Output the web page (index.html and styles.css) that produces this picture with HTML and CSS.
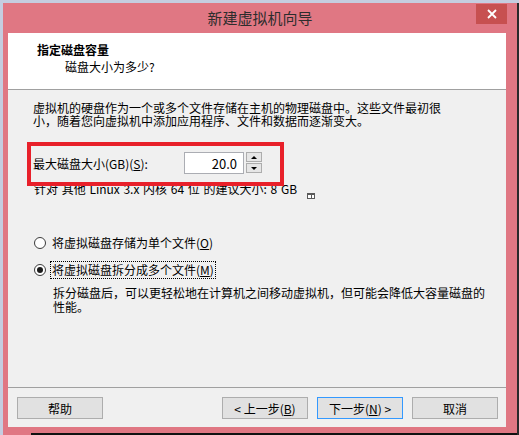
FILE: index.html
```html
<!DOCTYPE html>
<html lang="zh-CN">
<head>
  <meta charset="UTF-8">
  <title>新建虚拟机向导</title>
  <link rel="stylesheet" href="styles.css">
</head>
<body>
  <div class="window">
    <div class="titlebar">
      <span class="title">新建虚拟机向导</span>
      <button class="close" aria-label="关闭">
        <svg width="10" height="10" viewBox="0 0 10 10"><path d="M1 1 L9 9 M9 1 L1 9" stroke="#fff" stroke-width="1.8"/></svg>
      </button>
    </div>

    <div class="client">
      <header class="wizard-header">
        <h1>指定磁盘容量</h1>
        <p>磁盘大小为多少?</p>
      </header>

      <main class="wizard-body">
        <p class="intro">虚拟机的硬盘作为一个或多个文件存储在主机的物理磁盘中。这些文件最初很<br>小，随着您向虚拟机中添加应用程序、文件和数据而逐渐变大。</p>

        <div class="size-row">
          <label for="diskSize">最大磁盘大小(GB)(<u>S</u>):</label>
          <div class="spin">
            <input id="diskSize" type="text" value="20.0">
            <div class="spin-btns">
              <button class="up"></button>
              <button class="down"></button>
            </div>
          </div>
        </div>

        <p class="hint">针对 其他 Linux 3.x 内核 64 位 的建议大小: 8 GB
          <svg class="hint-icon" width="8" height="6" viewBox="0 0 8 6"><rect width="8" height="6" fill="#5a5a5a"/><rect x="1" y="2" width="3" height="3" fill="#fff"/><rect x="5" y="2" width="2" height="3" fill="#fff"/></svg>
        </p>

        <div class="radio"><span class="dot"></span><span class="text">将虚拟磁盘存储为单个文件(<u>O</u>)</span></div>
        <div class="radio checked"><span class="dot"></span><span class="text focus">将虚拟磁盘拆分成多个文件(<u>M</u>)</span></div>

        <p class="desc">拆分磁盘后，可以更轻松地在计算机之间移动虚拟机，但可能会降低大容量磁盘的<br>性能。</p>

        <div class="highlight"></div>
      </main>

      <footer class="buttons">
        <button class="btn help">帮助</button>
        <button class="btn">&lt; 上一步(<u>B</u>)</button>
        <button class="btn default">下一步(<u>N</u>) &gt;</button>
        <button class="btn">取消</button>
      </footer>
    </div>

    <div class="shadow"></div>
  </div>
  <div class="edge"></div>
</body>
</html>
```

FILE: styles.css
```css
:root {
  --frame: #e07783;
  --face: #f0f0f0;
  --line: #a0a0a0;
  --btn-face: #e1e1e1;
  --btn-border: #adadad;
  --accent: #3399ff;
  --mark: #e8202a;
}

html, body {
  margin: 0;
  height: 435px;
  overflow: hidden;
}

body {
  display: flex;
  padding: 3px 0 0 3px;
  box-sizing: border-box;
  background: #c5cde0;
  font-family: "Noto Sans CJK SC", "Microsoft YaHei", sans-serif;
  font-size: 12px;
  color: #000;
}

.window {
  width: 514px;
  height: 432px;
  background: var(--frame);
  display: flex;
  flex-direction: column;
}

.edge {
  width: 2px;
  background: #2a2a2a;
}

/* title bar */
.titlebar {
  position: relative;
  height: 30px;
  display: flex;
  align-items: center;
  justify-content: center;
}

.title {
  font-size: 15px;
  line-height: 20px;
  color: #2d2d2d;
}

.close {
  position: absolute;
  top: 1px;
  right: 10px;
  width: 31px;
  height: 20px;
  padding: 0;
  border: none;
  background: #c75050;
  display: flex;
  align-items: center;
  justify-content: center;
}

/* client area */
.client {
  margin: 0 11px 0 5px;
  height: 394px;
  background: var(--face);
  display: flex;
  flex-direction: column;
}

.wizard-header {
  height: 56px;
  background: #fff;
  border-bottom: 1px solid var(--line);
}

.wizard-header h1 {
  margin: 0;
  padding: 9px 0 0 29px;
  font-size: 12px;
  font-weight: bold;
  line-height: 16px;
}

.wizard-header p {
  margin: 1px 0 0 57px;
  line-height: 16px;
}

.wizard-body {
  position: relative;
  flex: 1;
  padding: 11px 0 0 25px;
}

.intro {
  margin: 0;
  line-height: 13px;
}

.size-row {
  display: flex;
  align-items: center;
  height: 22px;
  margin-top: 25px;
}

.size-row label {
  width: 151px;
}

.spin {
  display: flex;
  gap: 2px;
}

.spin input {
  width: 60px;
  height: 22px;
  box-sizing: border-box;
  border: 1px solid #abadb3;
  padding: 0 6px 0 0;
  text-align: right;
  font: inherit;
  font-size: 13px;
}

.spin-btns {
  display: flex;
  flex-direction: column;
  gap: 1px;
}

.spin-btns button {
  width: 16px;
  height: 10px;
  padding: 0;
  border: 1px solid var(--btn-border);
  background: #e6e6e6;
  display: flex;
  align-items: center;
  justify-content: center;
}

.spin-btns button::before {
  content: "";
  border-left: 3px solid transparent;
  border-right: 3px solid transparent;
}

.spin-btns .up::before {
  border-bottom: 3px solid #000;
}

.spin-btns .down::before {
  border-top: 3px solid #000;
}

.hint {
  margin: 8px 0 0 1px;
  line-height: 13px;
  word-spacing: 1px;
}

.hint-icon {
  margin-left: 6px;
  vertical-align: -5px;
}

.radio {
  display: flex;
  align-items: center;
  height: 18px;
  padding-left: 1px;
  margin-top: 35px;
}

.radio + .radio {
  margin-top: 9px;
}

.dot {
  width: 12px;
  height: 12px;
  box-sizing: border-box;
  border: 1px solid #3c3c3c;
  border-radius: 50%;
  background: #fff;
  margin-right: 4px;
  display: flex;
  align-items: center;
  justify-content: center;
}

.checked .dot::before {
  content: "";
  width: 6px;
  height: 6px;
  border-radius: 50%;
  background: #1a1a1a;
}

.text {
  line-height: 16px;
  padding: 0 1px;
  border: 1px solid transparent;
}

.text.focus {
  border: 1px dotted #000;
}

.desc {
  margin: 7px 0 0 20px;
  line-height: 14px;
}

/* red annotation over the size field */
.highlight {
  position: absolute;
  left: 19px;
  top: 52px;
  width: 257px;
  height: 44px;
  box-sizing: border-box;
  border: 4px solid var(--mark);
}

/* button row */
.buttons {
  display: flex;
  gap: 9px;
  padding: 9px 8px 8px 9px;
  border-top: 1px solid var(--line);
}

.btn {
  width: 86px;
  height: 22px;
  padding: 0;
  border: 1px solid var(--btn-border);
  background: var(--btn-face);
  font: inherit;
  color: #000;
}

.btn.help {
  margin-right: auto;
}

.btn.default {
  border-color: var(--accent);
}

.shadow {
  height: 2px;
  margin: 6px 0 0 28px;
  background: #111;
}
```
